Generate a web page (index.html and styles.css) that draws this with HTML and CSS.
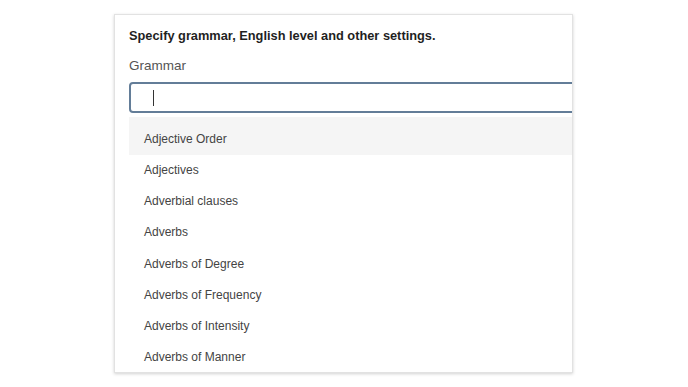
FILE: index.html
```html
<!DOCTYPE html>
<html lang="en">
<head>
    <meta charset="UTF-8">
    <title>Grammar settings</title>
    <link rel="stylesheet" href="styles.css">
</head>
<body>
<div id="container">
    <div class="card">
        <div class="heading">Specify grammar, English level and other settings.</div>
        <div class="label">Grammar</div>
        <div class="searchbox"><span class="caret"></span></div>
        <div class="options">
            <div class="option active">Adjective Order</div>
            <div class="option">Adjectives</div>
            <div class="option">Adverbial clauses</div>
            <div class="option">Adverbs</div>
            <div class="option">Adverbs of Degree</div>
            <div class="option">Adverbs of Frequency</div>
            <div class="option">Adverbs of Intensity</div>
            <div class="option">Adverbs of Manner</div>
        </div>
    </div>
</div>
</body>
</html>
```

FILE: styles.css
```css
body {
    margin: 0;
    background-color: #ffffff;
    font-family: "Liberation Sans", Arial, sans-serif;
}

#container {
    width: 688px;
    height: 387px;
    padding-top: 14px;
    box-sizing: border-box;
}

.card {
    margin-left: 114px;
    width: 459px;
    height: 359px;
    box-sizing: border-box;
    border: 1px solid #e2e2e2;
    box-shadow: 0 1px 3px rgba(0, 0, 0, 0.18);
    padding-left: 14px;
    overflow: hidden;
    background-color: #ffffff;
}

.heading {
    margin-top: 12px;
    height: 18px;
    line-height: 18px;
    font-size: 12.8px;
    font-weight: bold;
    color: #1f1f1f;
}

.label {
    margin-top: 12px;
    height: 18px;
    line-height: 18px;
    font-size: 13.5px;
    color: #555555;
}

.searchbox {
    margin-top: 7px;
    width: 470px;
    height: 31px;
    box-sizing: border-box;
    border: 2px solid #637d98;
    border-radius: 4px;
    padding-left: 22px;
    padding-top: 6px;
}

.caret {
    display: block;
    width: 1px;
    height: 16px;
    background-color: #333333;
}

.options {
    margin-top: 4px;
    width: 470px;
}

.option {
    height: 31.2px;
    line-height: 31px;
    padding-left: 15px;
    font-size: 12px;
    color: #444444;
}

.option.active {
    height: 38px;
    padding-top: 7px;
    box-sizing: border-box;
    background-color: #f5f5f5;
}
```
